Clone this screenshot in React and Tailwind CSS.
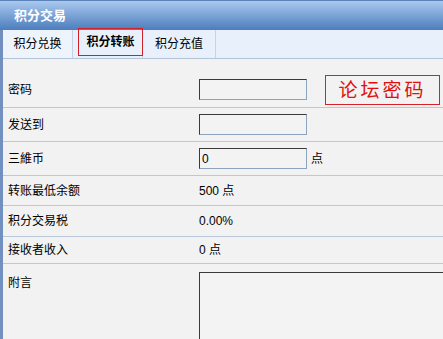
const FONT = { fontFamily: '"Liberation Sans", "Noto Sans CJK SC", sans-serif' }

function Field({ children }) {
  return (
    <input
      defaultValue={children}
      className="w-[108px] h-[21px] px-[2px] text-[12px] bg-[#f3f3f3] border border-t-[#3a3a3a] border-l-[#3a3a3a] border-r-[#8ea4bd] border-b-[#8ea4bd] outline-none"
    />
  )
}

function Row({ label, h, children, top }) {
  return (
    <div
      className={`grid grid-cols-[191px_1fr] pl-[5px] border-b border-[#b9c9db] ${top ? 'items-start' : 'items-center'} ${h}`}
    >
      <span className="text-[12px] text-black">{label}</span>
      <div className="flex items-center text-[12px] text-black">{children}</div>
    </div>
  )
}

export default function App() {
  return (
    <div className="w-[443px] h-[339px] overflow-hidden bg-[#f2f2f2]" style={FONT}>
      {/* 标题 */}
      <div className="h-[30px] border-t border-[#5a84b8] bg-gradient-to-b from-[#aac9ef] to-[#4c7dbc] flex items-center pl-[14px]">
        <span className="text-white font-bold text-[13px]">积分交易</span>
      </div>

      <div className="border-l-[3px] border-[#7190bf]">
        {/* 选项卡 */}
        <div className="h-[29px] bg-[#e8f1fb] border-b border-[#b3c4d8] flex text-[12px]">
          <div className="w-[70px] border-r border-[#c5d3e3] bg-[#eef4fc] flex items-center justify-center">积分兑换</div>
          <div className="relative w-[70px] border-r border-[#c5d3e3]">
            <div className="absolute left-[5px] top-[-2px] w-[65px] h-[28px] border border-[#d0202a] flex items-center justify-center font-bold">
              积分转账
            </div>
          </div>
          <div className="w-[73px] border-r border-[#c5d3e3] flex items-center justify-center">积分充值</div>
        </div>

        {/* 表单 */}
        <div className="pt-[13px]">
          <Row label="密码" h="h-[36px]">
            <Field />
            <div
              className="ml-[18px] w-[115px] h-[30px] border border-[#d8202a] flex items-center justify-center text-[#e01010] text-[19px] tracking-[3px]"
              style={{ fontFamily: '"Noto Sans CJK SC", serif' }}
            >
              论坛密码
            </div>
          </Row>
          <Row label="发送到" h="h-[34px]">
            <Field />
          </Row>
          <Row label="三維币" h="h-[34px]">
            <Field>0</Field>
            <span className="ml-[4px]">点</span>
          </Row>
          <Row label="转账最低余额" h="h-[30px]">500 点</Row>
          <Row label="积分交易税" h="h-[31px]">0.00%</Row>
          <Row label="接收者收入" h="h-[27px]">0 点</Row>
          <div className="grid grid-cols-[191px_1fr] pl-[5px] pt-[8px]">
            <span className="text-[12px] pt-[2px]">附言</span>
            <textarea className="w-[260px] h-[80px] bg-[#f3f3f3] border border-t-[#3a3a3a] border-l-[#3a3a3a] border-[#3a3a3a] outline-none resize-none" />
          </div>
        </div>
      </div>
    </div>
  )
}
